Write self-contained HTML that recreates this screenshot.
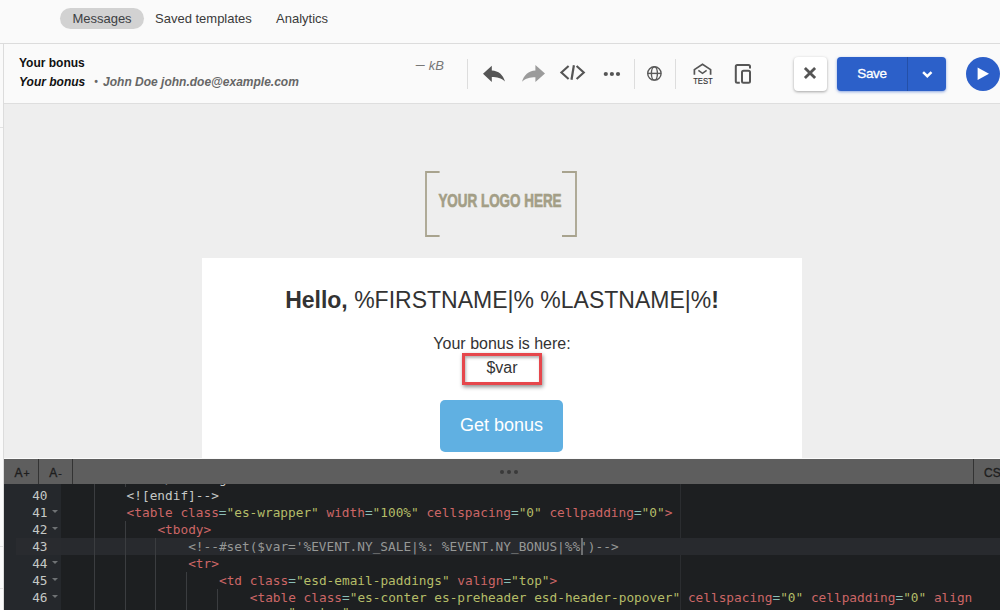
<!DOCTYPE html>
<html lang="en">
<head>
<meta charset="utf-8">
<title>Your bonus</title>
<style>
*{box-sizing:border-box;margin:0;padding:0}
html,body{width:1000px;height:610px;overflow:hidden;background:#fafafa;font-family:"Liberation Sans",Arial,sans-serif;}
body{position:relative}
.abs{position:absolute}
#topbar{left:0;top:0;width:1000px;height:44px;background:#fafafa;border-bottom:1px solid #dcdcdc}
.tab{position:absolute;top:8px;height:21px;line-height:21px;font-size:13px;color:#3a3a3a;white-space:nowrap}
#tab1{left:60px;width:84px;border-radius:11px;background:#d2d2d2;text-align:center;color:#3c4043}
#tab2{left:155px}
#tab3{left:276px}
#main{left:3px;top:44px;width:997px;height:566px;border-left:1px solid #dcdcdc;background:#eeeeee}
#hdr{left:4px;top:44px;width:996px;height:60px;background:#fafafa;border-bottom:1px solid #dedede}
#t1{left:19px;top:55px;font-size:12px;font-weight:bold;color:#111;line-height:16px;white-space:nowrap}
#t2{left:19px;top:74px;font-size:12px;font-weight:bold;font-style:italic;color:#111;line-height:16px;white-space:nowrap}
#t2 span{color:#666;}
#kb{left:415.5px;top:58px;font-size:13px;font-style:italic;color:#777;line-height:16px;white-space:nowrap}
.sep{position:absolute;top:59px;width:1px;height:30px;background:#dddddd}
#xbtn{left:794px;top:57px;width:33px;height:34px;background:#fff;border-radius:4px;box-shadow:0 1px 3px rgba(0,0,0,.35)}
#save{left:837px;top:57px;width:109px;height:34px;background:#2c60c9;border-radius:4px;box-shadow:0 1px 3px rgba(44,95,201,.55)}
#save .lbl{position:absolute;left:0;top:0;width:70px;height:34px;line-height:33px;text-align:center;color:#fff;font-size:13.5px;letter-spacing:-0.3px;-webkit-text-stroke:.3px #fff}
#save .dv{position:absolute;left:70px;top:0;width:1px;height:34px;background:#2450a8}
#play{left:966px;top:57px;width:34px;height:34px;border-radius:17px;background:#2c5fc9}
#white{left:202px;top:258px;width:600px;height:201px;background:#fff}
#h1{left:202px;top:285px;width:600px;text-align:center;font-size:23px;line-height:30px;color:#333;white-space:nowrap}
#p1{left:202px;top:332px;width:600px;text-align:center;font-size:16px;line-height:24px;color:#333}
#red{left:462px;top:353px;width:80px;height:32px;border:3px solid #e6474c;box-shadow:1px 2px 4px rgba(0,0,0,.45),inset 1px 2px 3px rgba(0,0,0,.3)}
#btn{left:440px;top:400px;width:123px;height:52px;border-radius:5px;background:#60b0e2;color:#fff;font-size:18px;line-height:50px;text-align:center}
#ctb{left:4px;top:459px;width:996px;height:25px;background:#5e5e5e}
#code{left:4px;top:484px;width:996px;height:126px;background:#1d1f21;overflow:hidden}
#gut{left:0;top:0;width:57px;height:126px;background:#25282c}
.ln{position:absolute;left:0;width:57px;height:17px;line-height:17px;font-family:"DejaVu Sans Mono","Liberation Mono",monospace;font-size:12.78px;color:#c5c8c6;white-space:pre}
.ln .n{position:absolute;right:13.5px;top:0;color:#c5c8c6}
.cl{position:absolute;left:61px;height:17px;line-height:17px;font-family:"DejaVu Sans Mono","Liberation Mono",monospace;font-size:12.78px;color:#c5c8c6;white-space:pre}
.t{color:#cc6666}.a{color:#cc6666}.o{color:#8abeb7}.s{color:#b5bd68}.c{color:#969896}

.actg{position:absolute;left:12px;width:45px;height:17px;background:#292b2f}
.actl{position:absolute;left:57px;width:939px;height:17px;background:#282a2e}
.ig{position:absolute;width:1px;height:17px;background:#3b3d40}
.fold{position:absolute;left:48px;top:6px;width:0;height:0;border-left:3px solid transparent;border-right:3px solid transparent;border-top:3.6px solid #6f7274}

.cb{position:absolute;top:0;height:25px;line-height:28.5px;font-size:12px;color:#1e1e1e;-webkit-text-stroke:0.35px #1e1e1e;overflow:hidden;text-align:center;border-right:1px solid #333;font-family:"Liberation Sans",Arial,sans-serif}
.dots{position:absolute;left:496px;top:11px;width:20px;height:4px}
.dots i{position:absolute;top:0;width:4px;height:4px;border-radius:2px;background:#3a3a3a}
.dots i:nth-child(1){left:0}.dots i:nth-child(2){left:7px}.dots i:nth-child(3){left:14px}
.sm{font-size:10.5px;margin-left:1px}
#wl{left:4px;top:458px;width:996px;height:1px;background:#fbfbfb}
.pm{position:absolute;left:676px;top:0;width:1px;height:126px;background:#2b2d30}
.cur{position:absolute;left:577px;top:54px;width:2px;height:17px;background:#6e7072}
.fl{position:absolute;left:0;width:3px;height:1px;background:#e2e2e2}
</style>
</head>
<body>
<div id="topbar" class="abs">
  <div class="tab" id="tab1">Messages</div>
  <div class="tab" id="tab2">Saved templates</div>
  <div class="tab" id="tab3">Analytics</div>
</div>
<div id="main" class="abs"></div>
<div id="hdr" class="abs"></div>
<div class="fl" style="top:127px"></div><div class="fl" style="top:546px"></div><div class="fl" style="top:588px"></div>
<div id="t1" class="abs">Your bonus</div>
<div id="t2" class="abs">Your bonus <span>&nbsp; <i style="font-size:10px;position:relative;top:-1px;margin-left:-1px;margin-right:2px">•</i> John Doe john.doe@example.com</span></div>
<div id="kb" class="abs"><span style="display:inline-block;width:13.3px;-webkit-text-stroke:.3px #777"><span style="display:inline-block;transform:scaleX(1.17);transform-origin:0 50%;position:relative;top:-0.7px">–</span></span>kB</div>
<div class="sep" style="left:467px"></div>
<div class="sep" style="left:634px"></div>
<div class="sep" style="left:675px"></div>

<svg class="abs" style="left:470px;top:55px" width="300" height="40" viewBox="470 55 300 40">
  <path d="M483,73.8 L491.8,65.8 L491.8,70.6 C498.5,70.8 503.2,75 505,81.6 C501.3,78 497,77 491.8,77 L491.8,82 Z" fill="#555"/>
  <path d="M545,73.4 L535.4,65 L535.4,70.4 C528.5,70.8 523.8,75 522,81.8 C525.7,78.2 530,77.2 535.4,77.2 L535.4,82 Z" fill="#9b9b9b"/>
  <g fill="none" stroke="#555" stroke-width="2.1">
    <path d="M568.6,66 L561.4,72.5 L568.6,79"/>
    <path d="M576.6,66 L583.8,72.5 L576.6,79"/>
    <path d="M573.9,65.2 L571.5,79.8" stroke-width="2.2"/>
  </g>
  <g fill="#555"><circle cx="605.8" cy="74" r="2.1"/><circle cx="611.9" cy="74" r="2.1"/><circle cx="618" cy="74" r="2.1"/></g>
  <g fill="none" stroke="#5a5a5a" stroke-width="1.4">
    <circle cx="654.4" cy="73.4" r="6.7"/>
    <ellipse cx="654.4" cy="73.4" rx="3" ry="6.7"/>
    <path d="M647.7,73.4 H661.1"/>
  </g>
  <g fill="none" stroke="#555" stroke-width="1.7">
    <path d="M694.4,74.8 V69.6 L702.5,64.2 L710.6,69.6 V74.8"/>
    <path d="M698.4,70.4 L702.5,73.4 L706.6,70.4" stroke-width="1.5"/>
  </g>
  <text x="693.2" y="83.8" font-family="'Liberation Sans',Arial,sans-serif" font-size="9" fill="#333" stroke="#333" stroke-width="0.15" textLength="19.6" lengthAdjust="spacingAndGlyphs">TEST</text>
  <g fill="none" stroke="#555" stroke-width="2">
    <path d="M739.8,82.8 H737.3 Q735.8,82.8 735.8,81.3 V66.5 Q735.8,65 737.3,65 H748.5 Q750,65 750,66.5 V68.4"/>
    <rect x="742" y="70.8" width="8" height="12" rx="1.5"/>
  </g>
</svg>
<div id="xbtn" class="abs"><svg width="33" height="34" viewBox="794 57 33 34"><path d="M804.9,67.9 L815.1,78.1 M815.1,67.9 L804.9,78.1" stroke="#555" stroke-width="2.8" fill="none"/></svg></div>
<div id="save" class="abs"><div class="lbl">Save</div><div class="dv"></div><svg class="abs" style="left:71px;top:0" width="38" height="34" viewBox="908 57 38 34"><path d="M923.1,72.2 L927.3,76.2 L931.5,72.2" stroke="#fff" stroke-width="2.5" fill="none"/></svg></div>
<div id="play" class="abs"><svg width="34" height="34" viewBox="966 57 34 34"><path d="M977.6,67.4 L989,73.7 L977.6,80 Z" fill="#fff"/></svg></div>


<svg class="abs" style="left:420px;top:165px" width="165" height="80" viewBox="420 165 165 80">
  <g fill="none" stroke="#a8a38e" stroke-width="1.8">
    <path d="M439.6,172 H426 V236 H439.6"/>
    <path d="M562,172 H576 V236 H562"/>
  </g>
  <text x="438.4" y="207.3" font-family="'Liberation Sans',Arial,sans-serif" font-weight="bold" font-size="18.8" fill="#a39e86" stroke="#a39e86" stroke-width="0.7" textLength="123.2" lengthAdjust="spacingAndGlyphs">YOUR LOGO HERE</text>
</svg>
<div id="white" class="abs"></div>
<div id="h1" class="abs"><b>Hello,</b> %FIRSTNAME|% %LASTNAME|%<b>!</b></div>
<div id="p1" class="abs">Your bonus is here:<br>$var</div>
<div id="red" class="abs"></div>
<div id="btn" class="abs">Get bonus</div>

<div id="wl" class="abs"></div>
<div id="ctb" class="abs">
  <div class="cb" style="left:0;width:35px;padding-left:2px">A<span class="sm">+</span></div>
  <div class="cb" style="left:35px;width:34px">A<span class="sm">-</span></div>
  <div class="dots"><i></i><i></i><i></i></div>
  <div class="cb" style="left:969px;width:40px;border-left:1px solid #333;border-right:0;text-align:left;padding-left:10px">CSS</div>
</div>
<div id="code" class="abs">
  <div id="gut" class="abs"></div>
<!--CODE-->
<div class="pm"></div>
<div class="ln" style="top:-14px"><span class="n">39</span><i class="fold"></i></div><i class="ig" style="left:89.8px;top:-14px"></i><i class="ig" style="left:120.6px;top:-14px"></i><div class="cl" style="top:-14px;left:153.4px">&lt;/v:background&gt;</div>
<div class="ln" style="top:3px"><span class="n">40</span></div><i class="ig" style="left:89.8px;top:3px"></i><div class="cl" style="top:3px;left:122.6px">&lt;![endif]--&gt;</div>
<div class="ln" style="top:20px"><span class="n">41</span><i class="fold"></i></div><i class="ig" style="left:89.8px;top:20px"></i><div class="cl" style="top:20px;left:122.6px"><span class="t">&lt;table</span> <span class="a">class</span><span class="o">=</span><span class="s">"es-wrapper"</span> <span class="a">width</span><span class="o">=</span><span class="s">"100%"</span> <span class="a">cellspacing</span><span class="o">=</span><span class="s">"0"</span> <span class="a">cellpadding</span><span class="o">=</span><span class="s">"0"</span><span class="t">&gt;</span></div>
<div class="ln" style="top:37px"><span class="n">42</span><i class="fold"></i></div><i class="ig" style="left:89.8px;top:37px"></i><i class="ig" style="left:120.6px;top:37px"></i><div class="cl" style="top:37px;left:153.4px"><span class="t">&lt;tbody&gt;</span></div>
<div class="actg" style="top:54px"></div><div class="actl" style="top:54px"></div>
<div class="ln" style="top:54px"><span class="n">43</span></div><i class="ig" style="left:89.8px;top:54px"></i><i class="ig" style="left:120.6px;top:54px"></i><i class="ig" style="left:151.4px;top:54px"></i><div class="cl" style="top:54px;left:184.2px"><span class="c">&lt;!--#set($var='%EVENT.NY_SALE|%: %EVENT.NY_BONUS|%%')--&gt;</span></div>
<div class="ln" style="top:71px"><span class="n">44</span><i class="fold"></i></div><i class="ig" style="left:89.8px;top:71px"></i><i class="ig" style="left:120.6px;top:71px"></i><i class="ig" style="left:151.4px;top:71px"></i><div class="cl" style="top:71px;left:184.2px"><span class="t">&lt;tr&gt;</span></div>
<div class="ln" style="top:88px"><span class="n">45</span><i class="fold"></i></div><i class="ig" style="left:89.8px;top:88px"></i><i class="ig" style="left:120.6px;top:88px"></i><i class="ig" style="left:151.4px;top:88px"></i><i class="ig" style="left:182.2px;top:88px"></i><div class="cl" style="top:88px;left:215.0px"><span class="t">&lt;td</span> <span class="a">class</span><span class="o">=</span><span class="s">"esd-email-paddings"</span> <span class="a">valign</span><span class="o">=</span><span class="s">"top"</span><span class="t">&gt;</span></div>
<div class="ln" style="top:105px"><span class="n">46</span><i class="fold"></i></div><i class="ig" style="left:89.8px;top:105px"></i><i class="ig" style="left:120.6px;top:105px"></i><i class="ig" style="left:151.4px;top:105px"></i><i class="ig" style="left:182.2px;top:105px"></i><i class="ig" style="left:213.0px;top:105px"></i><div class="cl" style="top:105px;left:245.8px"><span class="t">&lt;table</span> <span class="a">class</span><span class="o">=</span><span class="s">"es-conter es-preheader esd-header-popover"</span> <span class="a">cellspacing</span><span class="o">=</span><span class="s">"0"</span> <span class="a">cellpadding</span><span class="o">=</span><span class="s">"0"</span> <span class="a">align</span></div>
<i class="ig" style="left:89.8px;top:122px"></i><i class="ig" style="left:120.6px;top:122px"></i><i class="ig" style="left:151.4px;top:122px"></i><i class="ig" style="left:182.2px;top:122px"></i><i class="ig" style="left:213.0px;top:122px"></i><div class="cl" style="top:120px;left:276.6px"><span class="o">=</span><span class="s">"center"</span><span class="t">&gt;</span></div>
<div class="cur"></div>
<!--/CODE-->
</div>
</body>
</html>
